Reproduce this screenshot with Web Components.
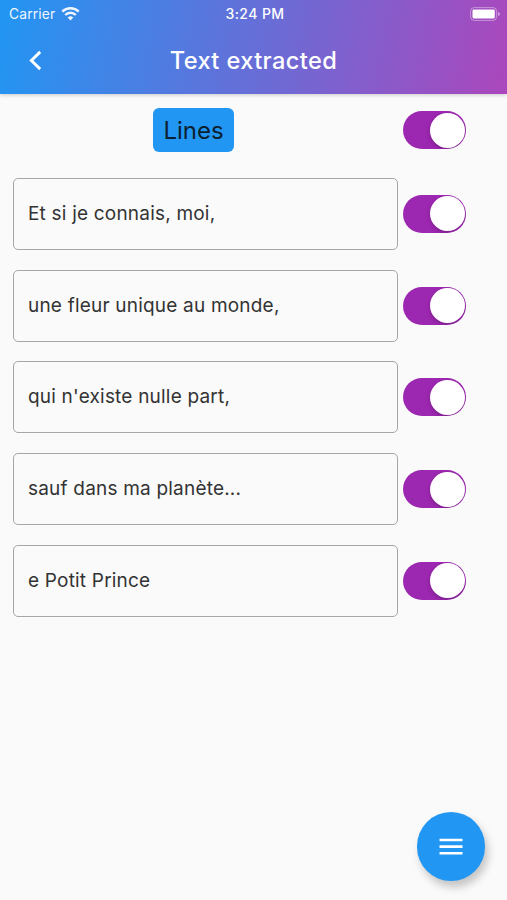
<!DOCTYPE html>
<html lang="fr">
<head>
<meta charset="utf-8">
<meta name="viewport" content="width=device-width, initial-scale=1">
<title>Text extracted</title>
<style>
  body {
    margin: 0;
    font-family: Inter, "Liberation Sans", sans-serif;
    background: #fafafa;
  }
</style>
</head>
<body>
<extract-screen>
  <app-header slot="header" carrier="Carrier" time="3:24 PM">Text extracted</app-header>
  <lines-heading>Lines</lines-heading>
  <text-line>Et si je connais, moi,</text-line>
  <text-line>une fleur unique au monde,</text-line>
  <text-line>qui n'existe nulle part,</text-line>
  <text-line>sauf dans ma planète...</text-line>
  <text-line>e Potit Prince</text-line>
  <menu-fab slot="action"></menu-fab>
</extract-screen>

<script>
class ExtractScreen extends HTMLElement {
  connectedCallback() {
    this.attachShadow({ mode: 'open' });
    this.shadowRoot.innerHTML = `
      <style>
        :host {
          display: flex;
          flex-direction: column;
          position: relative;
          height: 100vh;
          overflow: hidden;
        }
        main {
          flex: 1;
          display: flex;
          flex-direction: column;
          gap: 19.7px;
          padding: 14px 41px 0 13px;
        }
      </style>
      <slot name="header"></slot>
      <main><slot></slot></main>
      <slot name="action"></slot>
    `;
  }
}
customElements.define('extract-screen', ExtractScreen);

class AppHeader extends HTMLElement {
  connectedCallback() {
    this.attachShadow({ mode: 'open' });
    this.shadowRoot.innerHTML = `
      <style>
        :host {
          display: block;
          height: 94px;
          color: white;
          background: linear-gradient(100.5deg, #2196f3, #ab47bc);
          box-shadow: 0 1px 4px rgba(0, 0, 0, 0.2);
        }
        .status, .bar {
          display: grid;
          grid-template-columns: 1fr auto 1fr;
          align-items: center;
        }
        .status {
          height: 27px;
          padding: 0 6px 0 9px;
          font-size: 13.8px;
        }
        .carrier {
          display: flex;
          align-items: center;
          gap: 6px;
          opacity: 0.93;
          letter-spacing: 0.15px;
        }
        .time {
          font-size: 14px;
          font-weight: 500;
          letter-spacing: 0.4px;
        }
        .battery {
          justify-self: end;
        }
        .bar {
          height: 66px;
          padding: 0 28px;
        }
        h1 {
          margin: 0;
          font-size: 23.6px;
          font-weight: 500;
          letter-spacing: 0.4px;
        }
        svg {
          display: block;
        }
      </style>
      <div class="status">
        <div class="carrier">
          <span>${this.getAttribute('carrier')}</span>
          <svg width="19" height="14" viewBox="0 0 19 14" fill="none" stroke="white" stroke-width="2.4">
            <path d="M1.3 4.6a11.6 11.6 0 0 1 16.4 0"/>
            <path d="M4.2 8a7.5 7.5 0 0 1 10.6 0"/>
            <path d="M9.5 13.5l-2.8-2.9a4 4 0 0 1 5.6 0z" fill="white" stroke="none"/>
          </svg>
        </div>
        <div class="time">${this.getAttribute('time')}</div>
        <svg class="battery" width="31" height="14" viewBox="0 0 31 14">
          <rect x=".6" y=".6" width="26" height="12.8" rx="3.6" fill="none" stroke="white" stroke-opacity=".4"/>
          <rect x="2.5" y="2.6" width="22.3" height="8.8" rx="1.4" fill="white"/>
          <path d="M28 4.8q2 .8 2 2.2t-2 2.2z" fill="white" fill-opacity=".45"/>
        </svg>
      </div>
      <div class="bar">
        <svg width="16" height="22" viewBox="0 0 16 22" fill="none" stroke="white" stroke-width="2.9">
          <path d="M12.2 2.9L3.4 11.5l8.8 8.6"/>
        </svg>
        <h1><slot></slot></h1>
      </div>
    `;
  }
}
customElements.define('app-header', AppHeader);

class ToggleSwitch extends HTMLElement {
  connectedCallback() {
    this.attachShadow({ mode: 'open' });
    this.shadowRoot.innerHTML = `
      <style>
        :host {
          display: flex;
          justify-content: flex-end;
          align-items: center;
          box-sizing: border-box;
          width: 63px;
          height: 38px;
          padding: 0 1.5px;
          border-radius: 19px;
          overflow: hidden;
          background: #9c27b0;
        }
        .thumb {
          width: 35px;
          height: 35px;
          border-radius: 50%;
          background: white;
          box-shadow: 0 2px 4px rgba(0, 0, 0, 0.2);
        }
      </style>
      <div class="thumb"></div>
    `;
  }
}
customElements.define('toggle-switch', ToggleSwitch);

class LinesHeading extends HTMLElement {
  connectedCallback() {
    this.attachShadow({ mode: 'open' });
    this.shadowRoot.innerHTML = `
      <style>
        :host {
          display: flex;
          align-items: center;
          height: 44px;
          margin-bottom: 6.3px;
        }
        .label-area {
          flex: 1;
          display: flex;
          justify-content: center;
          margin-right: 29px;
        }
        .label {
          display: flex;
          align-items: center;
          justify-content: center;
          width: 81px;
          height: 44px;
          border-radius: 6px;
          background: #2196f3;
          color: #0c1f31;
          font-size: 24px;
        }
      </style>
      <div class="label-area"><div class="label"><slot></slot></div></div>
      <toggle-switch></toggle-switch>
    `;
  }
}
customElements.define('lines-heading', LinesHeading);

class TextLine extends HTMLElement {
  connectedCallback() {
    this.attachShadow({ mode: 'open' });
    this.shadowRoot.innerHTML = `
      <style>
        :host {
          display: flex;
          align-items: center;
          gap: 5px;
          height: 72px;
        }
        .field {
          flex: 1;
          box-sizing: border-box;
          height: 72px;
          padding: 0 14px;
          border: 1.5px solid #a6a6a6;
          border-radius: 5px;
          color: #333;
          font-size: 19px;
          line-height: 70px;
          letter-spacing: 0.2px;
          white-space: nowrap;
        }
      </style>
      <div class="field"><slot></slot></div>
      <toggle-switch></toggle-switch>
    `;
  }
}
customElements.define('text-line', TextLine);

class MenuFab extends HTMLElement {
  connectedCallback() {
    this.attachShadow({ mode: 'open' });
    this.shadowRoot.innerHTML = `
      <style>
        :host {
          position: absolute;
          right: 22px;
          bottom: 19.5px;
          display: flex;
          align-items: center;
          justify-content: center;
          width: 68.5px;
          height: 68.5px;
          border-radius: 50%;
          background: #2196f3;
          box-shadow: 3px 6px 9px rgba(0, 0, 0, 0.22);
        }
      </style>
      <svg width="24" height="17" viewBox="0 0 24 17" fill="white">
        <path d="M.5 .7h23v2.6H.5zM.5 7.3h23v2.6H.5zM.5 13.9h23v2.6H.5z"/>
      </svg>
    `;
  }
}
customElements.define('menu-fab', MenuFab);
</script>
</body>
</html>
